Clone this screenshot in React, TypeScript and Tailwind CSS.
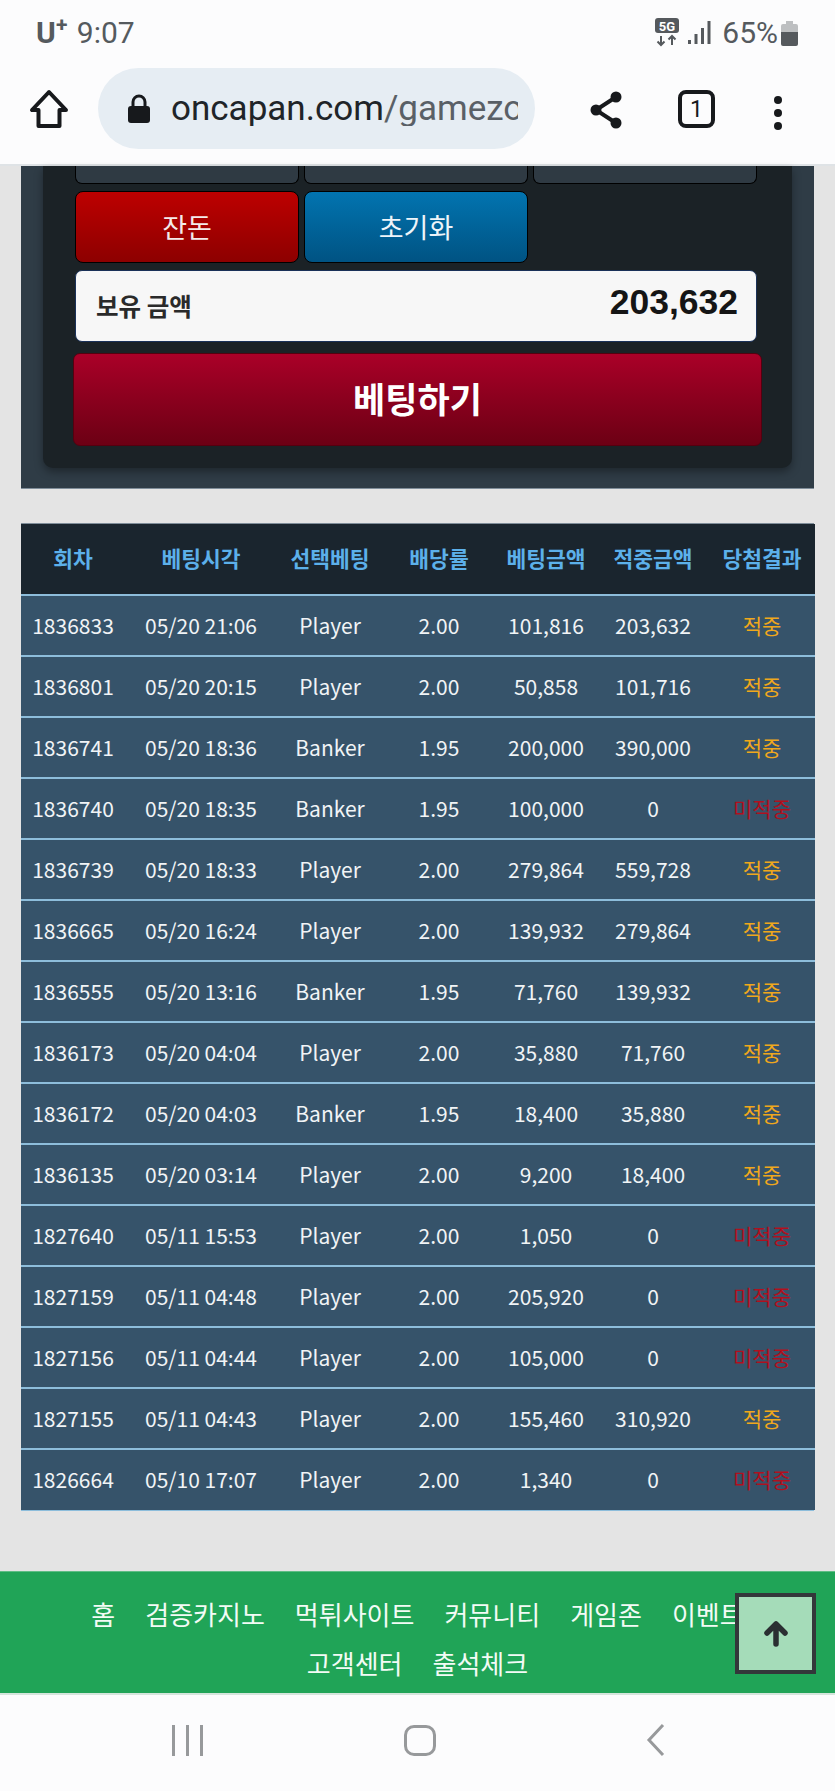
const rows = [
  ["1836833", "05/20 21:06", "Player", "2.00", "101,816", "203,632", "적중"],
  ["1836801", "05/20 20:15", "Player", "2.00", "50,858", "101,716", "적중"],
  ["1836741", "05/20 18:36", "Banker", "1.95", "200,000", "390,000", "적중"],
  ["1836740", "05/20 18:35", "Banker", "1.95", "100,000", "0", "미적중"],
  ["1836739", "05/20 18:33", "Player", "2.00", "279,864", "559,728", "적중"],
  ["1836665", "05/20 16:24", "Player", "2.00", "139,932", "279,864", "적중"],
  ["1836555", "05/20 13:16", "Banker", "1.95", "71,760", "139,932", "적중"],
  ["1836173", "05/20 04:04", "Player", "2.00", "35,880", "71,760", "적중"],
  ["1836172", "05/20 04:03", "Banker", "1.95", "18,400", "35,880", "적중"],
  ["1836135", "05/20 03:14", "Player", "2.00", "9,200", "18,400", "적중"],
  ["1827640", "05/11 15:53", "Player", "2.00", "1,050", "0", "미적중"],
  ["1827159", "05/11 04:48", "Player", "2.00", "205,920", "0", "미적중"],
  ["1827156", "05/11 04:44", "Player", "2.00", "105,000", "0", "미적중"],
  ["1827155", "05/11 04:43", "Player", "2.00", "155,460", "310,920", "적중"],
  ["1826664", "05/10 17:07", "Player", "2.00", "1,340", "0", "미적중"],
];

const headers = ["회차", "베팅시각", "선택베팅", "배당률", "베팅금액", "적중금액", "당첨결과"];
const footerLinks = ["홈", "검증카지노", "먹튀사이트", "커뮤니티", "게임존", "이벤트", "고객센터", "출석체크"];

function StatusBar() {
  return (
    <div className="flex h-[66px] items-center justify-between pl-[36px] pr-[37px] font-['Roboto',sans-serif] text-[30px] text-[#555a5e]">
      <div className="flex items-center">
        <span className="relative mr-[10px] text-[30px] font-bold leading-none">
          U<sup className="absolute left-[20px] top-[-3px] text-[21px] font-bold leading-none">+</sup>
        </span>
        <span className="ml-[11px] leading-none">9:07</span>
      </div>
      <div className="flex items-center">
        <svg width="26" height="30" viewBox="0 0 26 30" className="mr-[8px]">
          <rect x="1" y="0" width="24" height="15" rx="3" fill="#55595d" />
          <text x="13" y="12.5" textAnchor="middle" fontSize="13" fontWeight="700" fill="#fff" fontFamily="Roboto, sans-serif">5G</text>
          <path d="M7 18v9M3.500 23.500 7 27l3.500-3.500M18 27v-9M14.500 21.500 18 18l3.500 3.500" stroke="#55595d" strokeWidth="2" fill="none" />
        </svg>
        <svg width="23" height="24" viewBox="0 0 23 24" className="mr-[11px]">
          <rect x="0" y="19" width="3" height="4" fill="#55595d" />
          <rect x="6.500" y="13" width="3" height="10" fill="#55595d" />
          <rect x="13" y="7" width="3" height="16" fill="#55595d" />
          <rect x="19.500" y="0" width="3" height="23" fill="#55595d" />
        </svg>
        <span className="leading-none">65%</span>
        <svg width="17" height="25" viewBox="0 0 17 25" className="ml-[3px]">
          <path d="M5 0h7v3h3a2 2 0 0 1 2 2v6H0V5a2 2 0 0 1 2-2h3z" fill="#bdbfc1" />
          <path d="M0 11h17v12a2 2 0 0 1-2 2H2a2 2 0 0 1-2-2z" fill="#55595d" />
        </svg>
      </div>
    </div>
  );
}

function Toolbar() {
  return (
    <div className="flex h-[100px] items-start border-b-2 border-[#dfe3e6] pt-[2px]">
      <svg width="40" height="40" viewBox="0 0 40 40" className="ml-[29px] mt-[21px] shrink-0">
        <path d="M20 3 3 21h6.500v16h21V21H37z" fill="none" stroke="#17191c" strokeWidth="4" strokeLinejoin="round" />
      </svg>
      <div className="ml-[29px] flex h-[81px] w-[437px] items-center overflow-hidden rounded-full bg-[#e6edf3] pl-[29px]">
        <svg width="24" height="30" viewBox="0 0 24 30" className="shrink-0">
          <path d="M6 13V8a6 6 0 0 1 12 0v5" fill="none" stroke="#17191c" strokeWidth="3" />
          <rect x="1" y="12" width="22" height="17" rx="3" fill="#17191c" />
        </svg>
        <div className="ml-[20px] w-[347px] overflow-hidden whitespace-nowrap font-['Roboto',sans-serif] text-[35px] leading-none">
          <span className="text-[#202428]">oncapan.com</span>
          <span className="text-[#5a6066]">/gamezone</span>
        </div>
      </div>
      <svg width="34" height="38" viewBox="0 0 34 38" className="ml-[54px] mt-[23px] shrink-0">
        <path d="M27 6 7 19l20 13" fill="none" stroke="#17191c" strokeWidth="4" />
        <circle cx="27" cy="6" r="5.500" fill="#17191c" />
        <circle cx="7" cy="19" r="5.500" fill="#17191c" />
        <circle cx="27" cy="32" r="5.500" fill="#17191c" />
      </svg>
      <div className="ml-[55px] mt-[22px] flex h-[38px] w-[37px] shrink-0 items-center justify-center rounded-[8px] border-[4px] border-[#17191c] font-['Roboto',sans-serif] text-[23px] leading-none text-[#17191c]">
        1
      </div>
      <div className="ml-[59px] mt-[28px] flex shrink-0 flex-col gap-[5px]">
        <span className="h-[8px] w-[8px] rounded-full bg-[#17191c]" />
        <span className="h-[8px] w-[8px] rounded-full bg-[#17191c]" />
        <span className="h-[8px] w-[8px] rounded-full bg-[#17191c]" />
      </div>
    </div>
  );
}

function BetPanel() {
  return (
    <div className="mx-[21px] border-b border-[#7f8d99] bg-[#2f3c46] px-[22px] pb-[20px]">
      <div className="rounded-b-[10px] bg-[#1b2226] px-[32px] pb-[22px] shadow-[0_4px_8px_rgba(0,0,0,0.35)]">
        <div className="grid grid-cols-[224px_224px_224px] gap-x-[5px]">
          <div className="h-[18px] rounded-b-[7px] border border-t-0 border-black bg-[#2f3a43]" />
          <div className="h-[18px] rounded-b-[7px] border border-t-0 border-black bg-[#2f3a43]" />
          <div className="h-[18px] rounded-b-[7px] border border-t-0 border-black bg-[#2f3a43]" />
          <button className="mt-[7px] h-[72px] rounded-[8px] border border-black bg-gradient-to-b from-[#bd0000] to-[#8d0000] text-[27px] text-[#f4eaea]">잔돈</button>
          <button className="mt-[7px] h-[72px] rounded-[8px] border border-black bg-gradient-to-b from-[#0274b0] to-[#005383] text-[27px] text-[#eef5fa]">초기화</button>
        </div>
        <div className="mt-[7px] flex h-[72px] w-[682px] items-center justify-between rounded-[7px] border border-[#1a3158] bg-[#f7f7f7] pl-[20px] pr-[18px]">
          <span className="text-[24.500px] font-bold text-[#2a2a2a]">보유 금액</span>
          <span className="mt-[-7px] font-['Liberation_Sans',sans-serif] text-[35.500px] font-bold text-[#151515]">203,632</span>
        </div>
        <button className="ml-[-2px] mt-[11px] h-[93px] w-[689px] rounded-[7px] border border-[#55000f] bg-gradient-to-b from-[#aa0028] to-[#6c0014] pb-[3px] text-[35px] font-bold text-white">베팅하기</button>
      </div>
    </div>
  );
}

function HistoryTable() {
  return (
    <div className="mx-[21px] mt-[34px] border-t border-[#7f8d99]">
      <table className="w-full table-fixed border-collapse text-center">
        <colgroup>
          <col className="w-[104px]" />
          <col className="w-[152px]" />
          <col className="w-[106px]" />
          <col className="w-[112px]" />
          <col className="w-[102px]" />
          <col className="w-[112px]" />
          <col className="w-[106px]" />
        </colgroup>
        <thead>
          <tr className="h-[71px] bg-[#1a252e]">
            {headers.map((h) => (
              <th key={h} className="p-0 pb-[2px] text-[21.500px] font-bold text-[#5cb0ea]">{h}</th>
            ))}
          </tr>
        </thead>
        <tbody>
          {rows.map((r) => (
            <tr key={r[0]} className="h-[61px] bg-[#36536a] text-[21px] text-[#f1f4f6]">
              <td className="border-t-2 border-[#8dbddb] p-0">{r[0]}</td>
              <td className="border-t-2 border-[#8dbddb] p-0">{r[1]}</td>
              <td className="border-t-2 border-[#8dbddb] p-0">{r[2]}</td>
              <td className="border-t-2 border-[#8dbddb] p-0">{r[3]}</td>
              <td className="border-t-2 border-[#8dbddb] p-0">{r[4]}</td>
              <td className="border-t-2 border-[#8dbddb] p-0">{r[5]}</td>
              <td className={`border-t-2 border-[#8dbddb] p-0 ${r[6] === "적중" ? "text-[#f0a81c]" : "text-[#b0101e]"}`}>{r[6]}</td>
            </tr>
          ))}
        </tbody>
      </table>
      <div className="h-[1px] bg-[#8dbddb]" />
    </div>
  );
}

function FooterNav() {
  return (
    <div className="relative mt-[60px] h-[122px] border-t border-[#5fbd85] bg-[#20a457]">
      <div className="mx-auto flex w-[700px] flex-wrap justify-center gap-x-[30px] pt-[17px] text-[26px] leading-[49px] text-[#f2fbf5]">
        {footerLinks.map((l) => (
          <span key={l}>{l}</span>
        ))}
      </div>
      <div className="absolute left-[735px] top-[21px] flex h-[81px] w-[81px] items-center justify-center border-4 border-[#33373a] bg-[#a5dcb9]">
        <svg width="28" height="28" viewBox="0 0 28 28">
          <path d="M14 24V5M5 13l9-9 9 9" fill="none" stroke="#2b2f32" strokeWidth="5.500" strokeLinecap="round" strokeLinejoin="round" />
        </svg>
      </div>
    </div>
  );
}

function SystemNav() {
  return (
    <div className="flex flex-1 items-start border-t-2 border-[#d5e5dc] bg-[#fcfcfd]">
      <div className="ml-[172px] mt-[30px] flex gap-[11px]">
        <span className="h-[31px] w-[3px] bg-[#97999b]" />
        <span className="h-[31px] w-[3px] bg-[#97999b]" />
        <span className="h-[31px] w-[3px] bg-[#97999b]" />
      </div>
      <div className="ml-[201px] mt-[30px] h-[31px] w-[32px] rounded-[10px] border-[3px] border-[#97999b]" />
      <svg width="22" height="34" viewBox="0 0 22 34" className="ml-[209px] mt-[28px]">
        <path d="M18 2 4 17l14 15" fill="none" stroke="#97999b" strokeWidth="3" />
      </svg>
    </div>
  );
}

export default function App() {
  return (
    <div className="flex h-[1791px] w-[835px] flex-col overflow-hidden bg-[#e4e4e4] font-['Noto_Sans_CJK_KR',sans-serif]">
      <div className="bg-[#fcfcfd]">
        <StatusBar />
        <Toolbar />
      </div>
      <BetPanel />
      <HistoryTable />
      <FooterNav />
      <SystemNav />
    </div>
  );
}
